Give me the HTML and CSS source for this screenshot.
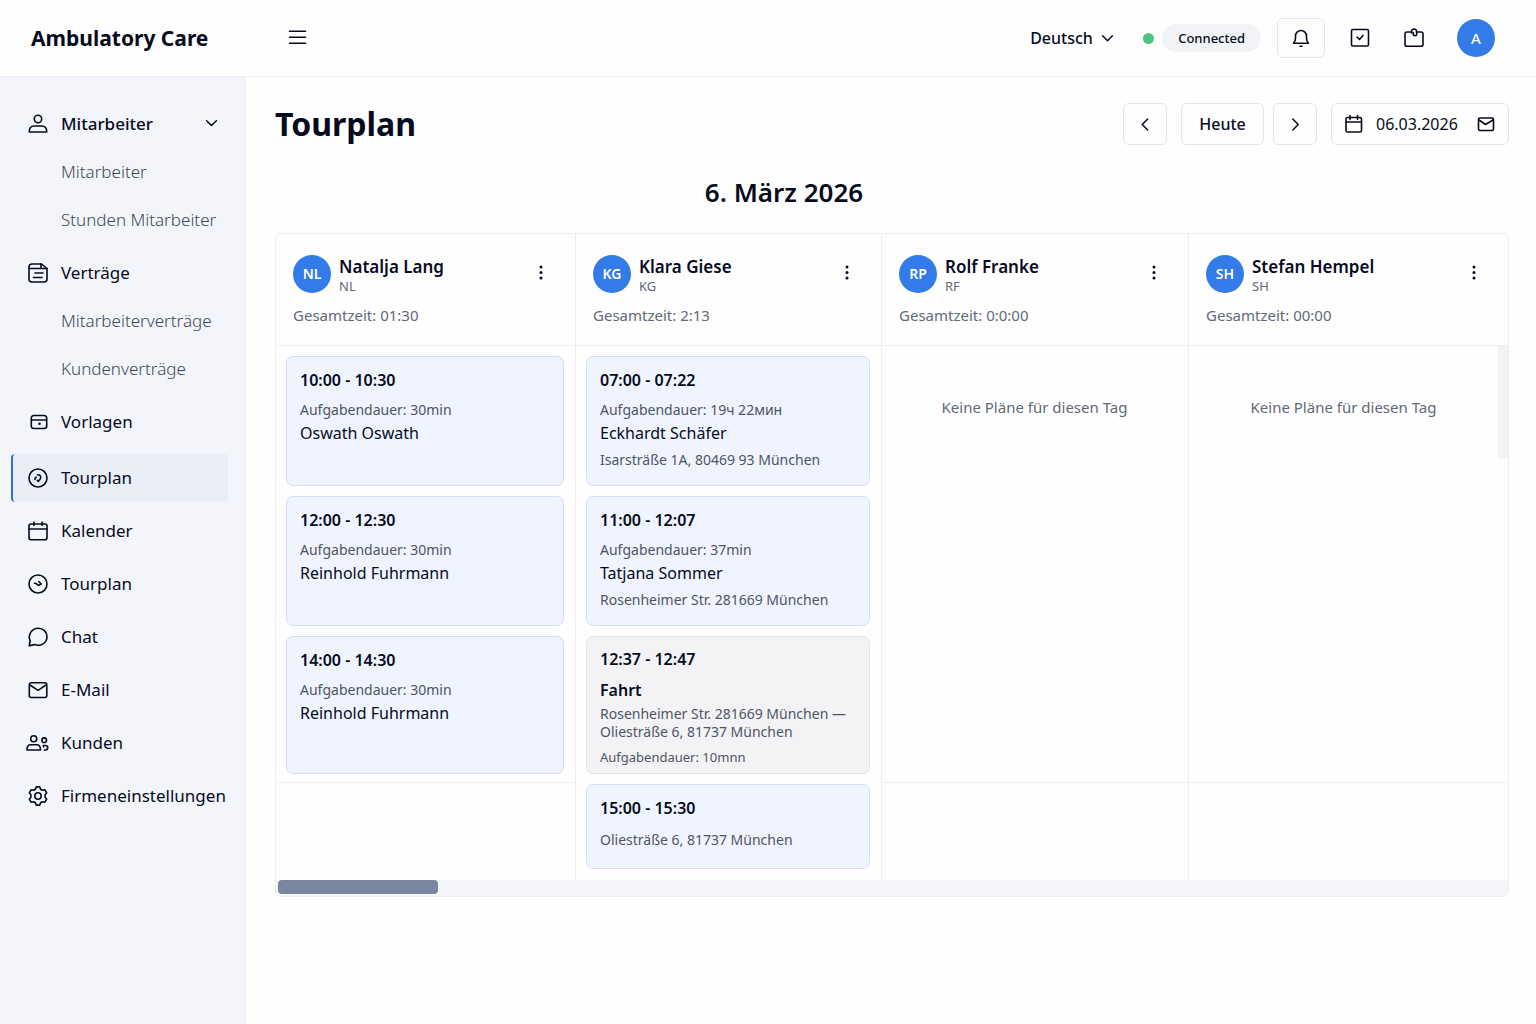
FILE: index.html
```html
<!DOCTYPE html>
<html lang="de">
<head>
<meta charset="utf-8">
<meta name="viewport" content="width=device-width, initial-scale=1">
<title>Tourplan – Ambulatory Care</title>
<link rel="stylesheet" href="styles.css">
</head>
<body>
<div class="app">
  <header class="topbar">
    <a class="brand" href="#">Ambulatory Care</a>
    <button class="icon-button" type="button" aria-label="Menü">
      <svg class="icon" viewBox="0 0 20 20"><path d="M1.500 3.200h16M1.500 9.200h16M1.500 15.200h16"/></svg>
    </button>
    <div class="topbar-right">
      <div class="language">
        <select class="language-select" aria-label="Sprache"><option>Deutsch</option></select>
        <svg class="icon icon-small" viewBox="0 0 12 12"><path d="M1.500 3.500 6 8l4.500-4.500"/></svg>
      </div>
      <div class="status"><span class="status-dot"></span><span class="status-pill">Connected</span></div>
      <button class="button bell-button" type="button" aria-label="Benachrichtigungen">
        <svg class="icon" viewBox="0 0 20 20"><path d="M2.500 15.200h15c-1.400-1.400-2-2.700-2-5V8a5.500 5.500 0 0 0-11 0v2.200c0 2.300-.6 3.600-2 5z"/><path d="M9 18.300h2"/></svg>
      </button>
      <div class="tools">
        <button class="icon-button" type="button" aria-label="Aufgaben">
          <svg class="icon" viewBox="0 0 20 20"><rect x="1.500" y="1.500" width="17" height="16.500" rx="1.500"/><path d="m7 9 2.500 2.500L13 7.500"/></svg>
        </button>
        <button class="icon-button" type="button" aria-label="Dienst">
          <svg class="icon" viewBox="0 0 20 20"><path d="M7.500 4H3C1.700 4 1 4.600 1 5.800v10.700c0 1.200.7 1.800 2 1.800h14c1.300 0 2-.6 2-1.800V5.800C19 4.600 18.300 4 17 4h-4.500"/><path d="M7.500 5V4c0-1.800.9-3 2.600-3s2.600 1.200 2.600 3v2c0 1-.8 1.700-1.700 1.700S9.300 7 9.300 6V4.500"/></svg>
        </button>
        <button class="avatar avatar-account" type="button" aria-label="Konto">A</button>
      </div>
    </div>
  </header>

  <nav class="sidebar" aria-label="Hauptmenü">
    <ul class="menu">
      <li>
        <a class="menu-item menu-item-open" href="#">
          <svg class="icon" viewBox="0 0 20 20"><circle cx="10" cy="5" r="3.700"/><path d="M1.300 18c-.5-4.200 2-6 4.700-6h8c2.700 0 5.200 1.800 4.700 6z"/></svg>
          <span class="menu-label">Mitarbeiter</span>
          <svg class="icon icon-small" viewBox="0 0 12 12"><path d="M1.500 2.500 6 7l4.500-4.500"/></svg>
        </a>
        <ul class="submenu">
          <li><a class="submenu-item" href="#">Mitarbeiter</a></li>
          <li><a class="submenu-item" href="#">Stunden Mitarbeiter</a></li>
        </ul>
      </li>
      <li>
        <a class="menu-item" href="#">
          <svg class="icon" viewBox="0 0 20 20"><path d="M4 1h9.500L19 5.500V16c0 2-1 3-3 3H4c-2 0-3-1-3-3V4c0-2 1-3 3-3z"/><path d="M1 5.500h18M13 1v4.500M7 10h8M5.500 14.500H14"/></svg>
          <span class="menu-label">Verträge</span>
        </a>
        <ul class="submenu">
          <li><a class="submenu-item" href="#">Mitarbeiterverträge</a></li>
          <li><a class="submenu-item" href="#">Kundenverträge</a></li>
        </ul>
      </li>
      <li>
        <a class="menu-item" href="#">
          <svg class="icon" viewBox="0 0 20 20"><path d="M6 3.500h10c1.800 0 2.700 1 2.700 2.700V14c0 1.700-.9 2.500-2.700 2.500H6c-1.800 0-2.700-.8-2.700-2.500V6.200c0-1.700.9-2.700 2.700-2.700zM3.300 8h15.400"/><circle class="icon-fill" cx="11.500" cy="11.700" r="1.300"/></svg>
          <span class="menu-label">Vorlagen</span>
        </a>
      </li>
      <li>
        <a class="menu-item menu-item-active" href="#" aria-current="page">
          <svg class="icon" viewBox="0 0 20 20"><circle cx="10" cy="10" r="9"/><path d="M7 11.300c-.2-1 .3-1.700 1.200-2.100M9.500 6.800c2.700-.2 3.900 1.800 2.900 3.900l-2 2.600-1.200-.9"/></svg>
          <span class="menu-label">Tourplan</span>
        </a>
      </li>
      <li>
        <a class="menu-item" href="#">
          <svg class="icon" viewBox="0 0 20 20"><rect x="1" y="3" width="18" height="15.700" rx="2"/><path d="M1 8h18M6 1v3.500M14 1v3.500"/></svg>
          <span class="menu-label">Kalender</span>
        </a>
      </li>
      <li>
        <a class="menu-item" href="#">
          <svg class="icon" viewBox="0 0 20 20"><circle cx="10" cy="10" r="9"/><path d="M6.500 9.300h1.200l2 1.500M10.700 7.500l2.600 2.500-2.800 1.200"/></svg>
          <span class="menu-label">Tourplan</span>
        </a>
      </li>
      <li>
        <a class="menu-item" href="#">
          <svg class="icon" viewBox="0 0 20 20"><path d="m1.200 18.800 1-4.800C-.5 8.200 3.500 1.200 10.300 1.200c4.800 0 8.700 3.600 8.700 8.500 0 6.200-6.300 10.300-12.300 7.900z"/></svg>
          <span class="menu-label">Chat</span>
        </a>
      </li>
      <li>
        <a class="menu-item" href="#">
          <svg class="icon" viewBox="0 0 20 20"><rect x="1.300" y="2.700" width="17.500" height="14.800" rx="2"/><path d="m2 5 8 5.300L18 5"/></svg>
          <span class="menu-label">E-Mail</span>
        </a>
      </li>
      <li>
        <a class="menu-item" href="#">
          <svg class="icon" viewBox="0 0 20 20"><circle cx="5.700" cy="5.700" r="3"/><path d="M-1 17c-.3-3.700 1.500-5.200 3.800-5.200h5.700c2.500 0 4.200 1.500 4 5.200z"/><circle cx="16.200" cy="7.200" r="2.300"/><path d="M15.300 12.500h2.500c1.300 0 1.900 1 1.900 2s-.7 2.500-2.100 2.500h-1.300M15.500 12.500v1.500"/></svg>
          <span class="menu-label">Kunden</span>
        </a>
      </li>
      <li>
        <a class="menu-item" href="#">
          <svg class="icon" viewBox="0 0 20 20"><path d="M8.300.9h3.400l.9 2.400 1.700 1 2.600-.5 1.800 3-1.600 2v2.400l1.600 2-1.800 3-2.600-.5-1.700 1-.9 2.400H8.300l-.9-2.400-1.700-1-2.600.5-1.800-3 1.600-2V8.800l-1.600-2 1.800-3 2.600.5 1.700-1z"/><circle cx="10" cy="10" r="3.200"/></svg>
          <span class="menu-label">Firmeneinstellungen</span>
        </a>
      </li>
    </ul>
  </nav>

  <main class="content">
    <div class="page-head">
      <h1 class="page-title">Tourplan</h1>
      <div class="date-nav">
        <button class="button step-button" type="button" aria-label="Vorheriger Tag">
          <svg class="icon icon-small" viewBox="0 0 12 12"><path d="M8 1 3 6l5 5"/></svg>
        </button>
        <div class="date-nav-pair">
          <button class="button today-button" type="button">Heute</button>
          <button class="button step-button" type="button" aria-label="Nächster Tag">
            <svg class="icon icon-small" viewBox="0 0 12 12"><path d="m3.500 1 5 5-5 5"/></svg>
          </button>
        </div>
        <label class="date-field">
          <svg class="icon icon-medium" viewBox="0 0 18 18"><rect x="1" y="2.500" width="15.500" height="14.500" rx="1.500"/><path d="M1 7h15.500M5 .5v4M12.500.5v4"/></svg>
          <input class="date-input" type="text" value="06.03.2026" aria-label="Datum">
          <svg class="icon icon-medium" viewBox="0 0 18 18"><rect x="1.500" y="3" width="15" height="12.500" rx="1.500"/><path d="m2 5 6.500 4.500L16 5"/></svg>
        </label>
      </div>
    </div>

    <h2 class="day-title">6. März 2026</h2>

    <div class="board">
      <div class="board-grid">
        <section class="column">
          <header class="column-head">
            <div class="person">
              <span class="avatar">NL</span>
              <div class="person-text"><h3 class="person-name">Natalja Lang</h3><p class="person-code">NL</p></div>
              <button class="icon-button" type="button" aria-label="Optionen"><svg class="icon" viewBox="0 0 20 20"><circle class="icon-fill" cx="10" cy="3" r="1.500"/><circle class="icon-fill" cx="10" cy="8.500" r="1.500"/><circle class="icon-fill" cx="10" cy="14" r="1.500"/></svg></button>
            </div>
            <p class="total">Gesamtzeit: 01:30</p>
          </header>
          <div class="slot">
            <article class="card">
              <h4 class="card-time">10:00 - 10:30</h4>
              <p class="card-note">Aufgabendauer: 30min</p>
              <p class="card-name">Oswath Oswath</p>
            </article>
            <article class="card">
              <h4 class="card-time">12:00 - 12:30</h4>
              <p class="card-note">Aufgabendauer: 30min</p>
              <p class="card-name">Reinhold Fuhrmann</p>
            </article>
            <article class="card card-tall">
              <h4 class="card-time">14:00 - 14:30</h4>
              <p class="card-note">Aufgabendauer: 30min</p>
              <p class="card-name">Reinhold Fuhrmann</p>
            </article>
          </div>
        </section>

        <section class="column">
          <header class="column-head">
            <div class="person">
              <span class="avatar">KG</span>
              <div class="person-text"><h3 class="person-name">Klara Giese</h3><p class="person-code">KG</p></div>
              <button class="icon-button" type="button" aria-label="Optionen"><svg class="icon" viewBox="0 0 20 20"><circle class="icon-fill" cx="10" cy="3" r="1.500"/><circle class="icon-fill" cx="10" cy="8.500" r="1.500"/><circle class="icon-fill" cx="10" cy="14" r="1.500"/></svg></button>
            </div>
            <p class="total">Gesamtzeit: 2:13</p>
          </header>
          <div class="slot slot-full">
            <article class="card">
              <h4 class="card-time">07:00 - 07:22</h4>
              <p class="card-note">Aufgabendauer: 19ч 22мин</p>
              <p class="card-name">Eckhardt Schäfer</p>
              <p class="card-address">Isarsträße 1A, 80469 93 München</p>
            </article>
            <article class="card">
              <h4 class="card-time">11:00 - 12:07</h4>
              <p class="card-note">Aufgabendauer: 37min</p>
              <p class="card-name">Tatjana Sommer</p>
              <p class="card-address">Rosenheimer Str. 281669 München</p>
            </article>
            <article class="card card-tall card-drive">
              <h4 class="card-time">12:37 - 12:47</h4>
              <p class="card-kind">Fahrt</p>
              <p class="card-route">Rosenheimer Str. 281669 München — Oliesträße 6, 81737 München</p>
              <p class="card-note">Aufgabendauer: 10mnn</p>
            </article>
            <article class="card card-short">
              <h4 class="card-time">15:00 - 15:30</h4>
              <p class="card-address">Oliesträße 6, 81737 München</p>
            </article>
          </div>
        </section>

        <section class="column">
          <header class="column-head">
            <div class="person">
              <span class="avatar">RP</span>
              <div class="person-text"><h3 class="person-name">Rolf Franke</h3><p class="person-code">RF</p></div>
              <button class="icon-button" type="button" aria-label="Optionen"><svg class="icon" viewBox="0 0 20 20"><circle class="icon-fill" cx="10" cy="3" r="1.500"/><circle class="icon-fill" cx="10" cy="8.500" r="1.500"/><circle class="icon-fill" cx="10" cy="14" r="1.500"/></svg></button>
            </div>
            <p class="total">Gesamtzeit: 0:0:00</p>
          </header>
          <div class="slot"><p class="empty">Keine Pläne für diesen Tag</p></div>
        </section>

        <section class="column">
          <header class="column-head">
            <div class="person">
              <span class="avatar">SH</span>
              <div class="person-text"><h3 class="person-name">Stefan Hempel</h3><p class="person-code">SH</p></div>
              <button class="icon-button" type="button" aria-label="Optionen"><svg class="icon" viewBox="0 0 20 20"><circle class="icon-fill" cx="10" cy="3" r="1.500"/><circle class="icon-fill" cx="10" cy="8.500" r="1.500"/><circle class="icon-fill" cx="10" cy="14" r="1.500"/></svg></button>
            </div>
            <p class="total">Gesamtzeit: 00:00</p>
          </header>
          <div class="slot slot-scroll"><p class="empty">Keine Pläne für diesen Tag</p><span class="scroll-y"></span></div>
        </section>
      </div>
      <div class="scroll-x"><div class="scroll-x-thumb"></div></div>
    </div>
  </main>
</div>
</body>
</html>
```
FILE: styles.css
```css
:root {
  --ink: #070b1f;
  --muted: #636978;
  --soft: #4f5565;
  --line: #eceef2;
  --blue: #337be8;
}

* { box-sizing: border-box; }

body {
  margin: 0;
  background: #fefefe;
  color: var(--ink);
  font-family: "Noto Sans", "Open Sans", sans-serif;
  font-size: 16px;
  line-height: 24px;
}

h1, h2, h3, h4, p, ul { margin: 0; padding: 0; }
ul { list-style: none; }
a { color: inherit; text-decoration: none; }
button, input, select { font: inherit; color: inherit; }

.app {
  display: grid;
  grid-template-columns: 246px minmax(0, 1fr);
  grid-template-rows: auto 1fr;
  min-height: 100vh;
}

.icon {
  display: block;
  flex: none;
  width: 20px;
  height: 20px;
  overflow: visible;
  fill: none;
  stroke: currentColor;
  stroke-width: 1.6;
  stroke-linecap: round;
  stroke-linejoin: round;
}
.icon-medium { width: 18px; height: 18px; }
.icon-small { width: 13px; height: 13px; stroke-width: 1.4; }
.icon-fill { fill: currentColor; stroke: none; }

.button {
  display: flex;
  align-items: center;
  justify-content: center;
  height: 42px;
  padding: 0;
  background: #fefefe;
  border: 1px solid #e3e5e9;
  border-radius: 6px;
}

.icon-button {
  display: flex;
  align-items: center;
  justify-content: center;
  width: 22px;
  height: 22px;
  padding: 0;
  background: none;
  border: 0;
}

.avatar {
  display: flex;
  align-items: center;
  justify-content: center;
  flex: none;
  width: 38px;
  height: 38px;
  padding: 0;
  background: var(--blue);
  border: 0;
  border-radius: 50%;
  color: #fff;
  font-size: 14px;
  font-weight: 600;
}
.avatar-account { font-size: 15px; font-weight: 500; }

/* Top bar */
.topbar {
  grid-column: 1 / -1;
  display: flex;
  align-items: center;
  height: 77px;
  padding: 0 41px 0 31px;
  border-bottom: 1px solid var(--line);
}
.brand {
  width: 256px;
  font-size: 21px;
  font-weight: 700;
}
.topbar-right {
  display: flex;
  align-items: center;
  gap: 16px;
  margin-left: auto;
}
.language {
  display: flex;
  align-items: center;
  gap: 8px;
  margin-right: 13px;
}
.language-select {
  appearance: none;
  padding: 0;
  background: none;
  border: 0;
  font-weight: 500;
}
.status { display: flex; align-items: center; gap: 8px; }
.status-dot {
  width: 11px;
  height: 11px;
  background: #50c282;
  border-radius: 50%;
}
.status-pill {
  padding: 2px 16px;
  background: #f1f3f7;
  border-radius: 14px;
  font-size: 13px;
  font-weight: 500;
}
.bell-button { width: 48px; height: 40px; }
.tools {
  display: flex;
  align-items: center;
  gap: 32px;
  margin-left: 8px;
}

/* Sidebar */
.sidebar {
  padding: 23px 17px 23px 11px;
  background: #f3f5fa;
  border-right: 1px solid var(--line);
}
.menu { display: flex; flex-direction: column; gap: 5px; }
.menu-item {
  display: flex;
  align-items: center;
  gap: 13px;
  height: 48px;
  padding: 0 10px 0 15px;
  border-left: 2px solid transparent;
  border-radius: 4px;
  font-size: 17px;
  white-space: nowrap;
}
.menu-label { flex: 1; }
.menu-item-open { font-weight: 500; }
.menu-item-active {
  margin-top: 3px;
  background: #e9eef7;
  border-left-color: #2f6fe0;
}
.submenu-item {
  display: flex;
  align-items: center;
  height: 48px;
  padding-left: 50px;
  color: #424858;
  font-size: 17px;
  font-weight: 300;
  white-space: nowrap;
}

/* Page */
.content { padding: 26px 27px 26px 29px; }
.page-head {
  display: flex;
  align-items: center;
  justify-content: space-between;
}
.page-title {
  font-size: 32px;
  line-height: 42px;
  font-weight: 700;
}
.date-nav { display: flex; gap: 14px; }
.date-nav-pair { display: flex; gap: 9px; }
.step-button { width: 44px; }
.today-button {
  width: 83px;
  font-weight: 500;
}
.date-field {
  display: flex;
  align-items: center;
  gap: 13px;
  width: 178px;
  height: 42px;
  padding: 0 13px;
  border: 1px solid #e3e5e9;
  border-radius: 6px;
}
.date-input {
  flex: 1;
  min-width: 0;
  padding: 0;
  background: none;
  border: 0;
}
.day-title {
  margin: 29px 0 23px;
  padding-right: 216px;
  font-size: 26px;
  line-height: 36px;
  font-weight: 600;
  text-align: center;
}

/* Board */
.board {
  border: 1px solid var(--line);
  border-radius: 6px;
  overflow: hidden;
}
.board-grid {
  display: grid;
  grid-template-columns: 299fr 306fr 307fr 320fr;
  grid-template-rows: auto auto 1fr;
}
.column {
  display: grid;
  grid-row: 1 / 4;
  grid-template-rows: subgrid;
  min-width: 0;
}
.column + .column { border-left: 1px solid var(--line); }
.column-head {
  padding: 19px 23px 18px 17px;
  border-bottom: 1px solid var(--line);
}
.person { display: flex; align-items: center; gap: 8px; }
.person-text { flex: 1; padding-top: 3px; }
.person-name {
  font-size: 17px;
  line-height: 21px;
  font-weight: 600;
}
.person-code {
  color: var(--muted);
  font-size: 13px;
  line-height: 18px;
}
.total {
  margin-top: 8px;
  color: var(--muted);
  font-size: 15px;
}
.slot {
  display: flex;
  flex-direction: column;
  gap: 10px;
  padding: 10px 11px 8px 10px;
  border-bottom: 1px solid var(--line);
}
.slot-full {
  grid-row: 2 / 4;
  padding-bottom: 11px;
  border-bottom: 0;
}
.slot-scroll { position: relative; padding-right: 20px; }
.empty {
  padding-top: 39px;
  color: var(--muted);
  font-size: 15px;
  text-align: center;
}

.card {
  min-height: 130px;
  padding: 11px 13px;
  background: #f0f4ff;
  border: 1px solid #d5def7;
  border-radius: 7px;
}
.card-tall { min-height: 138px; }
.card-short { min-height: 85px; }
.card-drive {
  padding-top: 10px;
  padding-bottom: 6px;
  background: #f3f3f5;
  border-color: #e3e3e8;
}
.card-time {
  font-size: 16px;
  font-weight: 600;
}
.card-note {
  margin-top: 8px;
  color: var(--soft);
  font-size: 14px;
  line-height: 20px;
}
.card-name { margin-top: 1px; }
.card-address {
  margin-top: 5px;
  color: var(--soft);
  font-size: 14px;
  line-height: 20px;
}
.card-kind { margin-top: 7px; font-weight: 600; }
.card-route {
  margin-top: 3px;
  color: var(--soft);
  font-size: 14px;
  line-height: 18px;
}
.card-drive .card-note { margin-top: 6px; font-size: 13px; }
.card-short .card-address { margin-top: 10px; }

.scroll-y {
  position: absolute;
  top: 0;
  right: 0;
  width: 10px;
  height: 113px;
  background: #f1f2f5;
  border-radius: 0 0 4px 4px;
}
.scroll-x {
  height: 16px;
  padding-left: 2px;
  background: #f3f5f8;
}
.scroll-x-thumb {
  width: 13%;
  height: 14px;
  background: #7b86a0;
  border-radius: 4px;
}
```
